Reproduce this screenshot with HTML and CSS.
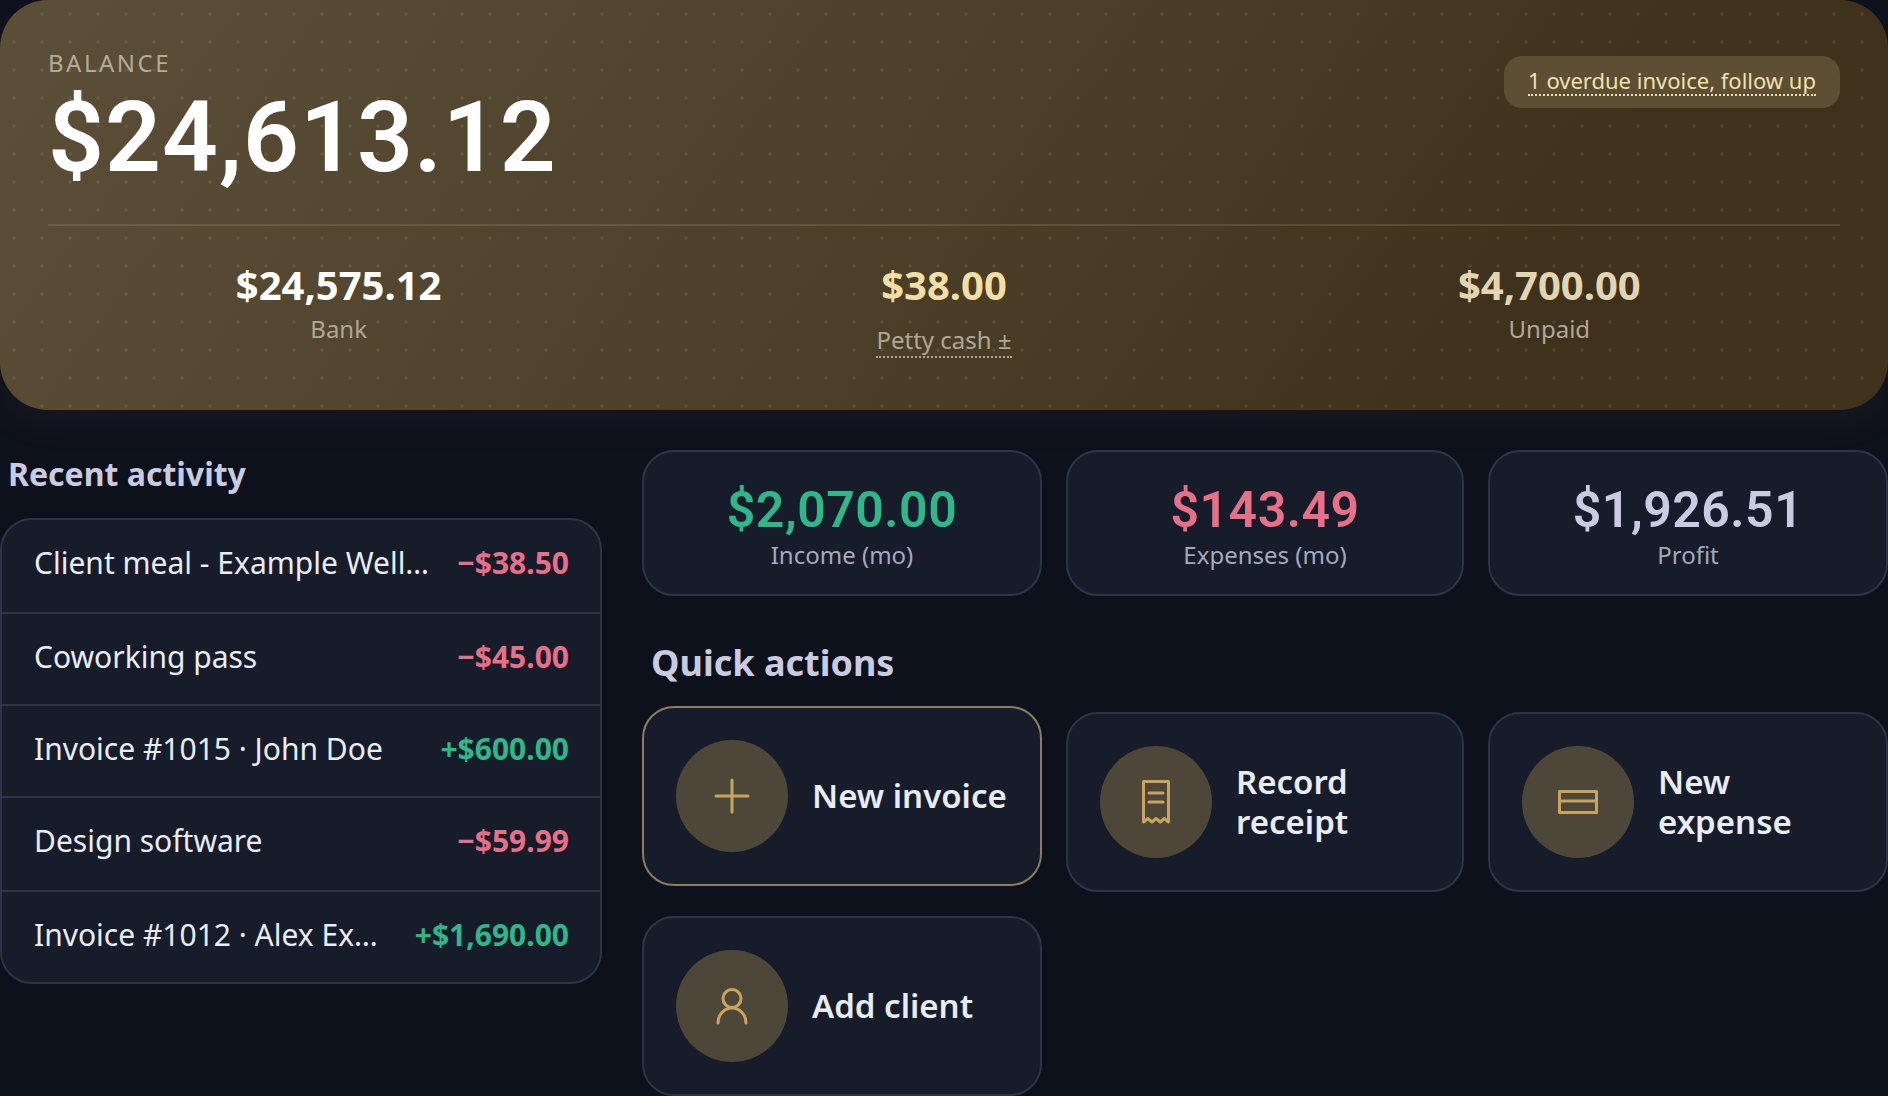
FILE: index.html
```html
<!DOCTYPE html>
<html lang="en">
<head>
<meta charset="utf-8">
<title>Balance</title>
<link rel="stylesheet" href="styles.css">
</head>
<body>
<section class="hero">
  <div class="hero-top">
    <div>
      <div class="eyebrow">BALANCE</div>
      <div class="total">$24,613.12</div>
    </div>
    <div class="badge"><a class="dotted">1 overdue invoice, follow up</a></div>
  </div>
  <div class="hero-stats">
    <div class="hero-stat"><div class="hero-val">$24,575.12</div><div class="hero-lab">Bank</div></div>
    <div class="hero-stat"><div class="hero-val gold">$38.00</div><div class="hero-lab petty"><a class="dotted-lab">Petty cash ±</a></div></div>
    <div class="hero-stat"><div class="hero-val sand">$4,700.00</div><div class="hero-lab">Unpaid</div></div>
  </div>
</section>
<main class="main">
  <div class="left">
    <h2 class="head-left">Recent activity</h2>
    <div class="list">
      <div class="row tall"><span class="name">Client meal - Example Well…</span><span class="amt neg">−$38.50</span></div>
      <div class="row"><span class="name">Coworking pass</span><span class="amt neg">−$45.00</span></div>
      <div class="row"><span class="name">Invoice #1015 · John Doe</span><span class="amt pos">+$600.00</span></div>
      <div class="row tall"><span class="name">Design software</span><span class="amt neg">−$59.99</span></div>
      <div class="row"><span class="name">Invoice #1012 · Alex Ex…</span><span class="amt pos">+$1,690.00</span></div>
    </div>
  </div>
  <div class="right">
    <div class="stats">
      <div class="card stat"><div class="stat-val pos">$2,070.00</div><div class="stat-lab">Income (mo)</div></div>
      <div class="card stat"><div class="stat-val neg">$143.49</div><div class="stat-lab">Expenses (mo)</div></div>
      <div class="card stat"><div class="stat-val muted">$1,926.51</div><div class="stat-lab">Profit</div></div>
    </div>
    <h2 class="head-right">Quick actions</h2>
    <div class="actions">
      <div class="card action lifted">
        <div class="circle"><svg class="ico" viewBox="0 0 56 56"><path d="M28 12v32M12 28h32"/></svg></div>
        <div class="action-text">New invoice</div>
      </div>
      <div class="card action">
        <div class="circle"><svg class="ico" viewBox="0 0 56 56"><path d="M15.5 7.5h25V48l-4.2-3.5-4.1 3.5-4.2-3.5-4 3.5-4.2-3.5-4.3 3.5Z"/><path d="M21 19h14M21 28h14"/></svg></div>
        <div class="action-text">Record receipt</div>
      </div>
      <div class="card action">
        <div class="circle"><svg class="ico" viewBox="0 0 56 56"><rect x="9.5" y="17.5" width="37" height="21"/><path d="M9.5 27h37"/></svg></div>
        <div class="action-text">New expense</div>
      </div>
      <div class="card action">
        <div class="circle"><svg class="ico" viewBox="0 0 56 56"><circle cx="28" cy="20.5" r="9"/><path d="M14 45c0-8 6-15 14-15s14 7 14 15"/></svg></div>
        <div class="action-text">Add client</div>
      </div>
    </div>
  </div>
</main>
</body>
</html>
```
FILE: styles.css
```css
* { box-sizing: border-box; }
html, body { margin: 0; padding: 0; }
body {
  width: 1888px;
  height: 1096px;
  overflow: hidden;
  background: #0d111c;
  color: #e8ecf6;
  font-family: "Noto Sans", sans-serif;
}
.hero {
  height: 410px;
  padding: 47px 48px 0;
  border-radius: 48px;
  background-color: #473b23;
  background-image:
    radial-gradient(circle at 14px 14px, rgba(255,255,255,.07) 1.5px, transparent 2px),
    linear-gradient(125deg, #5b4f37 0%, #4b3f27 50%, #3f321c 80%, #3f321c 100%);
  background-size: 28px 28px, 100% 100%;
  box-shadow: 0 12px 40px rgba(201,164,95,.06);
}
.hero-top {
  display: flex;
  justify-content: space-between;
  align-items: flex-start;
  height: 179px;
  border-bottom: 2px solid rgba(255,255,255,.11);
}
.eyebrow {
  font-size: 24px;
  line-height: 32px;
  letter-spacing: 2.5px;
  color: #b3aa98;
}
.total {
  margin-top: 5px;
  font-family: Roboto, sans-serif;
  font-weight: 600;
  font-size: 98px;
  line-height: 108px;
  letter-spacing: 1px;
  color: #fff;
}
.badge {
  margin-top: 9px;
  height: 52px;
  padding: 0 24px 2px;
  border-radius: 18px;
  background: #5c4f33;
  display: flex;
  align-items: center;
  font-size: 22px;
  color: #f2e0ad;
}
.dotted {
  line-height: 28px;
  border-bottom: 2px dotted #f2e0ad;
}
.hero-stats {
  display: grid;
  grid-template-columns: repeat(3, 1fr);
  gap: 24px;
  padding-top: 35px;
  text-align: center;
}
.hero-val {
  margin-bottom: 3px;
  font-weight: 700;
  font-size: 40px;
  line-height: 48px;
  color: #fff;
}
.gold { color: #f3dfa6; }
.sand { color: #e3d4b2; }
.hero-lab {
  font-size: 24px;
  line-height: 34px;
  color: #afa796;
}
.petty { padding-top: 11px; }
.dotted-lab { border-bottom: 2px dotted #afa796; }
.main {
  display: grid;
  grid-template-columns: 602px 1fr;
  gap: 40px;
  padding-top: 40px;
}
h2 { margin: 0; font-weight: 700; color: #c9cbe0; }
.head-left {
  margin-top: 2px;
  margin-bottom: 22px;
  padding-left: 8px;
  font-size: 32px;
  line-height: 44px;
}
.list {
  border: 2px solid #2c3547;
  border-radius: 32px;
  background: #171c2a;
  overflow: hidden;
}
.row {
  display: flex;
  justify-content: space-between;
  align-items: center;
  gap: 20px;
  height: 92px;
  padding: 0 31px 5px 32px;
  font-size: 30px;
  border-bottom: 2px solid #2c3547;
}
.row.tall { height: 94px; padding-bottom: 7px; }
.row:last-child { border-bottom: 0; height: 90px; }
.name {
  flex: 1;
  white-space: nowrap;
  color: #e8ecf6;
}
.amt { font-weight: 700; white-space: nowrap; }
.pos { color: #2db88a; }
.neg { color: #e86f87; }
.muted { color: #c9cbe0; }
.stats, .actions {
  display: grid;
  grid-template-columns: 400px 398px 400px;
}
.stats { gap: 24px; }
.actions { gap: 24px; }
.card {
  border: 2px solid #2c3547;
  border-radius: 32px;
  background: #171c2a;
}
.stat {
  height: 146px;
  text-align: center;
  padding-top: 30px;
}
.stat-val {
  font-family: Roboto, sans-serif;
  font-weight: 600;
  font-size: 50px;
  line-height: 56px;
  letter-spacing: .5px;
}
.stat-lab {
  font-size: 24px;
  line-height: 34px;
  color: #a3a9bd;
}
.head-right {
  margin-top: 45px;
  margin-bottom: 27px;
  padding-left: 9px;
  font-size: 36px;
  line-height: 44px;
}
.action {
  height: 180px;
  padding: 32px;
  display: flex;
  align-items: center;
  gap: 24px;
}
.lifted {
  transform: translateY(-6px);
  border-color: #8c7d5e;
}
.circle {
  flex: none;
  width: 112px;
  height: 112px;
  border-radius: 50%;
  background: #4d4739;
  display: flex;
  align-items: center;
  justify-content: center;
}
.ico {
  width: 56px;
  height: 56px;
  fill: none;
  stroke: #c9a45f;
  stroke-width: 3;
  stroke-linecap: round;
  stroke-linejoin: round;
}
.action-text {
  font-size: 33px;
  line-height: 40px;
  font-weight: 600;
  color: #e8ecf6;
}
```
